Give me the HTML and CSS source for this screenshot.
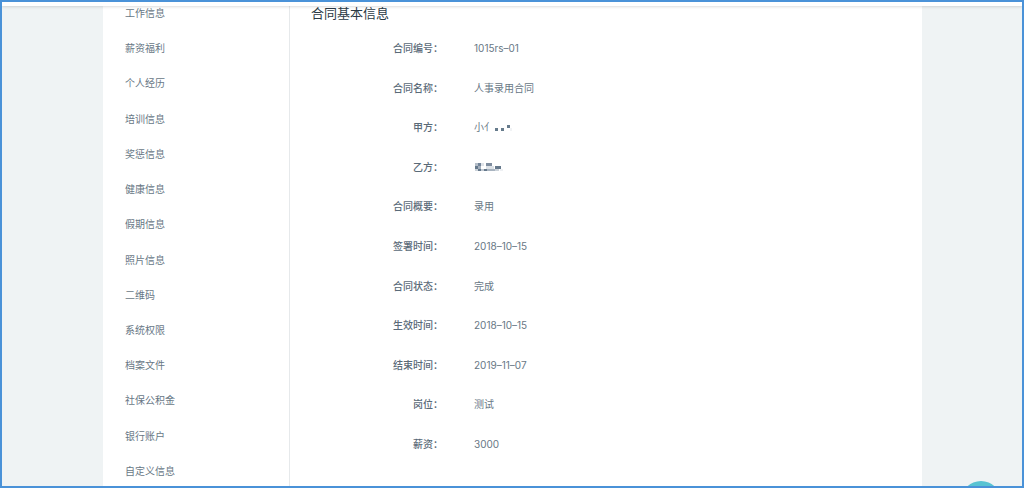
FILE: index.html
```html
<!DOCTYPE html>
<html lang="zh-CN">
<head>
    <meta charset="UTF-8">
    <meta name="viewport" content="width=device-width, initial-scale=1.0">
    <title>合同基本信息</title>
    <link rel="stylesheet" href="styles.css">
</head>
<body>
    <div class="page">
        <header class="topbar"></header>

        <div class="panel">
            <!-- 左侧菜单 -->
            <nav class="menu">
                <a href="#">工作信息</a>
                <a href="#">薪资福利</a>
                <a href="#">个人经历</a>
                <a href="#">培训信息</a>
                <a href="#">奖惩信息</a>
                <a href="#">健康信息</a>
                <a href="#">假期信息</a>
                <a href="#">照片信息</a>
                <a href="#">二维码</a>
                <a href="#">系统权限</a>
                <a href="#">档案文件</a>
                <a href="#">社保公积金</a>
                <a href="#">银行账户</a>
                <a href="#">自定义信息</a>
            </nav>

            <!-- 合同详情 -->
            <main class="content">
                <h1>合同基本信息</h1>
                <dl class="details">
                    <div class="row"><dt>合同编号：</dt><dd>1015rs–01</dd></div>
                    <div class="row"><dt>合同名称：</dt><dd>人事录用合同</dd></div>
                    <div class="row">
                        <dt>甲方：</dt>
                        <dd>小亻<svg class="mask-dots" width="18" height="12" viewBox="0 0 18 12">
                            <g fill="#667b8c">
                                <rect x="1" y="7" width="3" height="3"/>
                                <rect x="7" y="7" width="3" height="3"/>
                                <rect x="13" y="4" width="3" height="3"/>
                            </g>
                            <rect x="16" y="7" width="2" height="3" fill="#f1f3f5"/>
                        </svg></dd>
                    </div>
                    <div class="row">
                        <dt>乙方：</dt>
                        <dd><svg width="30" height="12" viewBox="0 0 30 12">
                            <rect x="1" y="2" width="3" height="3" fill="#b5bec8"/>
                            <rect x="4" y="2" width="3" height="3" fill="#74859a"/>
                            <rect x="7" y="2" width="3" height="3" fill="#dfe3e8"/>
                            <rect x="12" y="2" width="6" height="3" fill="#7f8d9f"/>
                            <rect x="1" y="5" width="3" height="3" fill="#66798c"/>
                            <rect x="4" y="5" width="3" height="3" fill="#a5b0bd"/>
                            <rect x="12" y="5" width="8" height="3" fill="#dde2e7"/>
                            <rect x="21" y="5" width="6" height="3" fill="#66798c"/>
                            <rect x="1" y="8" width="3" height="2" fill="#ccd3da"/>
                            <rect x="4" y="8" width="3" height="2" fill="#66798c"/>
                            <rect x="7" y="8" width="3" height="2" fill="#c1c9d2"/>
                            <rect x="10" y="8" width="3" height="2" fill="#66798c"/>
                            <rect x="13" y="8" width="8" height="2" fill="#a9b4c0"/>
                            <rect x="21" y="8" width="4" height="2" fill="#ccd3da"/>
                            <rect x="26" y="8" width="3" height="2" fill="#eef0f3"/>
                        </svg></dd>
                    </div>
                    <div class="row"><dt>合同概要：</dt><dd>录用</dd></div>
                    <div class="row"><dt>签署时间：</dt><dd>2018–10–15</dd></div>
                    <div class="row"><dt>合同状态：</dt><dd>完成</dd></div>
                    <div class="row"><dt>生效时间：</dt><dd>2018–10–15</dd></div>
                    <div class="row"><dt>结束时间：</dt><dd>2019–11–07</dd></div>
                    <div class="row"><dt>岗位：</dt><dd>测试</dd></div>
                    <div class="row"><dt>薪资：</dt><dd>3000</dd></div>
                </dl>
            </main>
        </div>

        <button class="float-btn" type="button"></button>
    </div>
</body>
</html>
```
FILE: styles.css
```css
* {
    box-sizing: border-box;
}
body {
    margin: 0;
    font-family: Inter, "Noto Sans CJK SC", sans-serif;
    font-size: 10px;
    line-height: 16px;
    color: #687785;
}
.page {
    position: relative;
    display: flex;
    flex-direction: column;
    min-height: 100vh;
    border: 2px solid #4a92d8;
    background-color: #eff3f4;
    overflow: hidden;
}
.topbar {
    position: absolute;
    top: 0;
    left: 0;
    right: 0;
    height: 4px;
    background-color: #fff;
    box-shadow: 0 1px 3px rgba(0, 0, 0, 0.14);
}
.panel {
    display: flex;
    flex: 1;
    margin: 0 100px 0 101px;
    background-color: #fff;
}
.menu {
    display: flex;
    flex-direction: column;
    justify-content: space-between;
    width: 187px;
    padding: 3px 22px 7px;
    border-right: 1px solid #e6e9eb;
}
.menu a {
    color: inherit;
    text-decoration: none;
}
.content {
    display: flex;
    flex: 1;
    flex-direction: column;
    padding: 1px 21px 34px;
}
h1 {
    margin: 0 0 17px;
    font-size: 13px;
    font-weight: 400;
    line-height: 20px;
    color: #2b3a45;
}
.details {
    display: flex;
    flex: 1;
    flex-direction: column;
    justify-content: space-between;
    margin: 0;
}
.row {
    display: flex;
    gap: 31px;
}
dt {
    width: 132px;
    font-weight: 500;
    color: #5a6a78;
    text-align: right;
}
dd {
    display: flex;
    align-items: center;
    margin: 0;
    height: 16px;
}
.mask-dots {
    background-color: #fff;
}
.float-btn {
    position: absolute;
    right: 21px;
    bottom: -35px;
    width: 40px;
    height: 40px;
    border: none;
    border-radius: 50%;
    background-color: #58c3d2;
    cursor: pointer;
}
```
